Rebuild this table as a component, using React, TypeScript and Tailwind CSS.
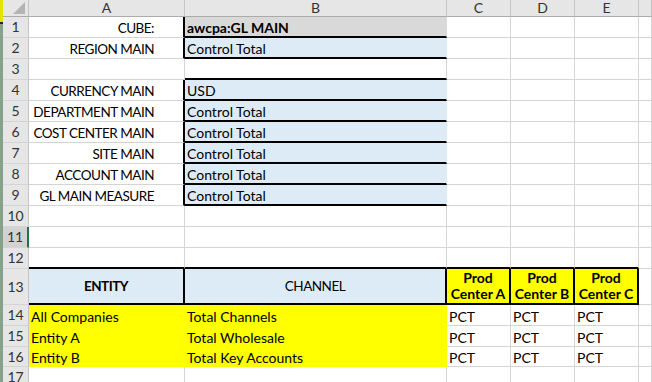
import React from "react";

type Edge = "g" | "k" | "t";

const RIGHT: Record<Edge, string> = {
  g: "border-r border-r-[#d4d4d4]",
  k: "border-r-2 border-r-black",
  t: "border-r border-r-transparent",
};

const BOTTOM: Record<Edge, string> = {
  g: "border-b border-b-[#d4d4d4]",
  k: "border-b-2 border-b-black",
  t: "border-b border-b-transparent",
};

const ALIGN = {
  l: "justify-start pl-[2px]",
  r: "justify-end pr-[29px]",
  c: "justify-center text-center",
};

type CellDef = {
  text?: React.ReactNode;
  r?: Edge;
  b?: Edge;
  bg?: string;
  align?: "l" | "r" | "c";
  bold?: boolean;
  mid?: boolean;
  caps?: boolean;
};

const COLS = ["w-[156px]", "w-[262px]", "w-[64px]", "w-[64px]", "w-[64px]", "flex-1"];

function Cell({ def, width }: { def: CellDef; width: string }) {
  const align = ALIGN[def.align ?? "l"];
  const size = def.caps ? "text-[13.5px] tracking-[-0.5px]" : "text-[14px]";
  return (
    <div
      className={`box-border flex shrink-0 overflow-visible whitespace-nowrap leading-[17px] text-black ${size} ${width} ${RIGHT[def.r ?? "g"]} ${BOTTOM[def.b ?? "g"]} ${def.bg ?? "bg-white"} ${align} ${def.mid ? "items-center" : "items-end"} ${def.bold ? "font-bold" : "font-normal"}`}
    >
      {def.text}
    </div>
  );
}

type RowDef = { n: number; h: string; cells: CellDef[]; selected?: boolean };

const BLUE = "bg-[#ddebf7]";
const GREY = "bg-[#d9d9d9]";
const YEL = "bg-[#ffff00]";

const empty = (): CellDef[] => [{}, {}, {}, {}, {}, {}];

function paramRow(n: number, label: string, value: string): RowDef {
  return {
    n,
    h: "h-[21px]",
    cells: [
      { text: label, align: "r", r: "k", caps: true },
      { text: value, bg: BLUE, r: "t", b: "k" },
      {},
      {},
      {},
      {},
    ],
  };
}

const prod = (letter: string): CellDef => ({
  text: (
    <span className="leading-[16px]">
      Prod
      <br />
      Center {letter}
    </span>
  ),
  bg: YEL,
  r: "k",
  b: "k",
  align: "c",
  bold: true,
  mid: true,
});

const dataRow = (n: number, h: string, entity: string, channel: string): RowDef => ({
  n,
  h,
  cells: [
    { text: entity, bg: YEL, r: "t", b: "t" },
    { text: channel, bg: YEL, r: "t", b: "t" },
    { text: "PCT" },
    { text: "PCT" },
    { text: "PCT" },
    {},
  ],
});

const ROWS: RowDef[] = [
  {
    n: 1,
    h: "h-[21px]",
    cells: [
      { text: "CUBE:", align: "r", r: "k", caps: true },
      { text: "awcpa:GL MAIN", bg: GREY, r: "t", b: "k", bold: true },
      {},
      {},
      {},
      {},
    ],
  },
  paramRow(2, "REGION MAIN", "Control Total"),
  { n: 3, h: "h-[21px]", cells: [{}, { b: "k" }, {}, {}, {}, {}] },
  paramRow(4, "CURRENCY MAIN", "USD"),
  paramRow(5, "DEPARTMENT MAIN", "Control Total"),
  paramRow(6, "COST CENTER MAIN", "Control Total"),
  paramRow(7, "SITE MAIN", "Control Total"),
  paramRow(8, "ACCOUNT MAIN", "Control Total"),
  paramRow(9, "GL MAIN MEASURE", "Control Total"),
  { n: 10, h: "h-[21px]", cells: empty() },
  { n: 11, h: "h-[21px]", cells: empty(), selected: true },
  { n: 12, h: "h-[21px]", cells: [{ b: "k" }, { b: "k" }, { b: "k" }, { b: "k" }, { b: "k" }, {}] },
  {
    n: 13,
    h: "h-[36px]",
    cells: [
      { text: "ENTITY", bg: BLUE, r: "k", b: "k", align: "c", bold: true, mid: true, caps: true },
      { text: "CHANNEL", bg: BLUE, r: "k", b: "k", align: "c", mid: true, caps: true },
      prod("A"),
      prod("B"),
      prod("C"),
      {},
    ],
  },
  dataRow(14, "h-[21px]", "All Companies", "Total Channels"),
  dataRow(15, "h-[21px]", "Entity A", "Total Wholesale"),
  dataRow(16, "h-[20px]", "Entity B", "Total Key Accounts"),
  { n: 17, h: "h-[21px]", cells: empty() },
];

function RowHeader({ n, selected }: { n: number; selected?: boolean }) {
  return (
    <div
      className={`box-border flex w-[26px] shrink-0 items-center justify-center text-[14px] leading-none text-[#333] border-b border-b-[#d4d4d4] ${
        selected ? "bg-[#d2d2d2] border-r-2 border-r-[#217346]" : "bg-[#e6e6e6] border-r border-r-[#c4c4c4]"
      }`}
    >
      {n}
    </div>
  );
}

function ColumnHeaders() {
  const letters = ["A", "B", "C", "D", "E", ""];
  return (
    <div className="flex h-[17px] shrink-0">
      <div className="box-border flex w-[26px] shrink-0 items-end justify-end border-b border-r border-b-[#ababab] border-r-[#c4c4c4] bg-[#e6e6e6] pb-[1px] pr-[2px]">
        <svg width="13" height="13" viewBox="0 0 13 13">
          <polygon points="12,0 12,12 0,12" fill="#b4b4b4" />
        </svg>
      </div>
      {letters.map((l, i) => (
        <div
          key={i}
          className={`box-border flex shrink-0 items-center justify-center border-b border-r border-b-[#ababab] border-r-[#c4c4c4] bg-[#e6e6e6] text-[14px] leading-none text-[#333] ${COLS[i]}`}
        >
          {l}
        </div>
      ))}
    </div>
  );
}

export default function App() {
  return (
    <div className="flex h-[382px] w-[652px] overflow-hidden bg-white [font-family:Lato,'Liberation_Sans',sans-serif]">
      <div className="flex w-[3px] shrink-0 flex-col bg-[#86a08a]">
        <div className="h-[22px] bg-[#e4e400]" />
        <div className="h-[2px] bg-[#2a2a2a]" />
      </div>
      <div className="flex min-w-0 flex-1 flex-col">
        <ColumnHeaders />
        {ROWS.map((row) => (
          <div key={row.n} className={`flex shrink-0 ${row.h}`}>
            <RowHeader n={row.n} selected={row.selected} />
            {row.cells.map((c, i) => (
              <Cell key={i} def={c} width={COLS[i]} />
            ))}
          </div>
        ))}
      </div>
    </div>
  );
}
